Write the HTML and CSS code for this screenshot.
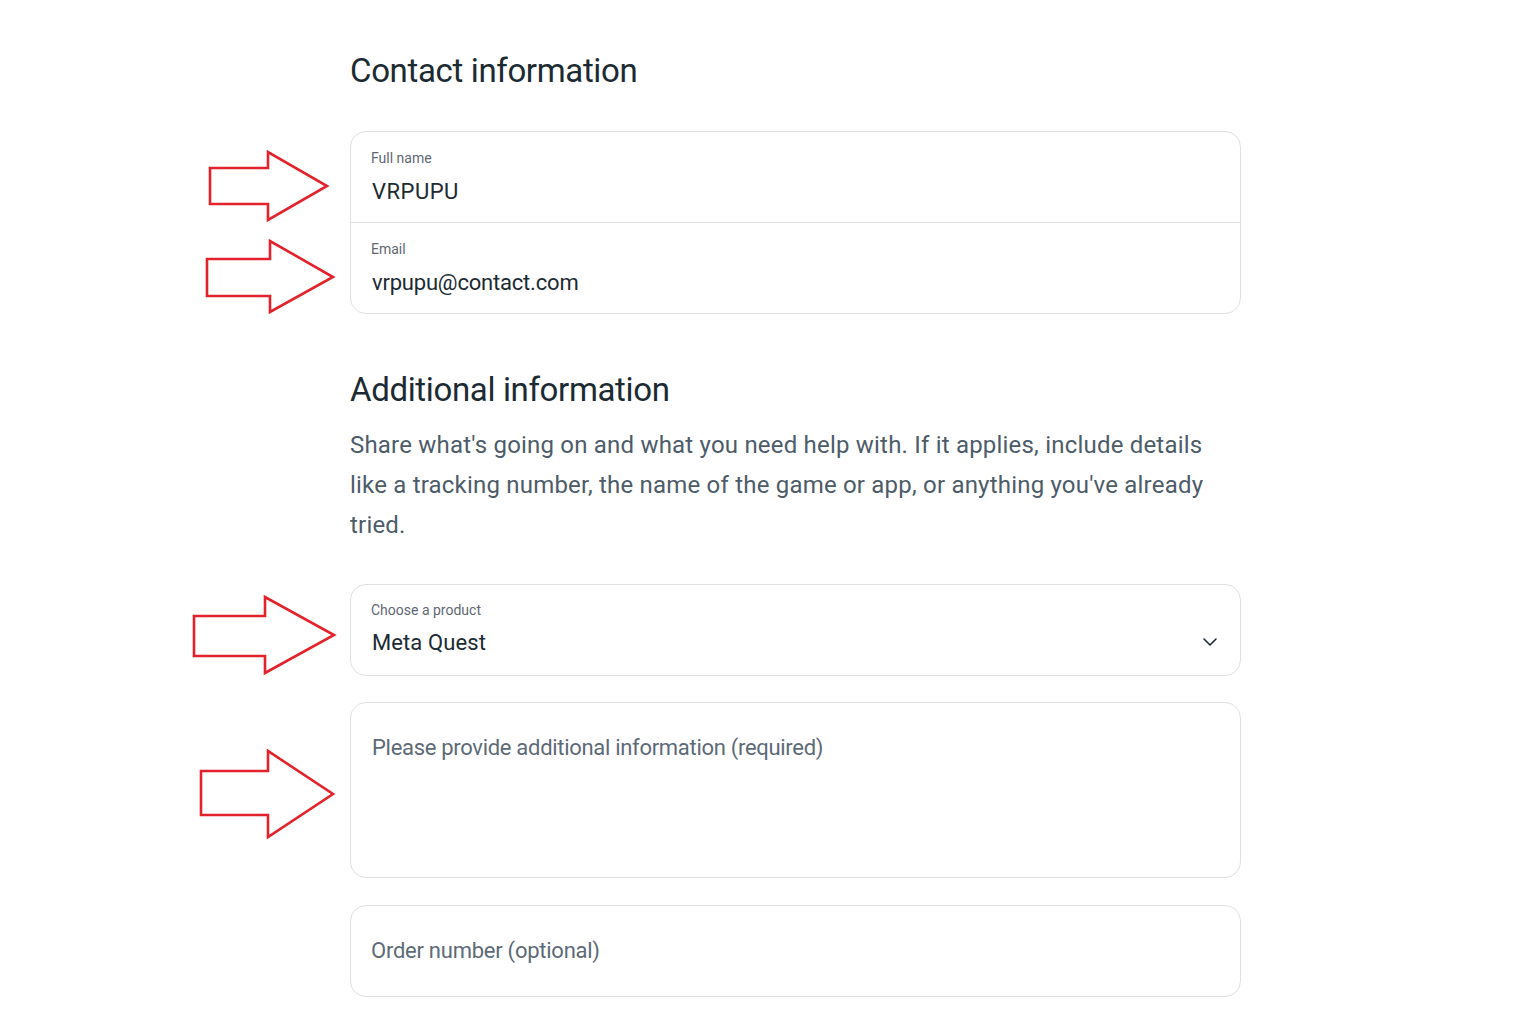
FILE: index.html
```html
<!DOCTYPE html>
<html lang="en">
<head>
  <meta charset="UTF-8">
  <title>Contact support</title>
  <link rel="stylesheet" href="styles.css">
</head>
<body>

  <div class="page">
    <!-- Annotation arrows drawn over the page -->
    <svg class="arrows" width="1536" height="1024" viewBox="0 0 1536 1024">
      <polygon points="210,168 268,168 268,152 327,186 268,220 268,204 210,204"/>
      <polygon points="207,259 270,259 270,241 333,277 270,312 270,296 207,296"/>
      <polygon points="194,616 265,616 265,597 334,635 265,673 265,656 194,656"/>
      <polygon points="201,771 268,771 268,751 333,794 268,837 268,815 201,815"/>
    </svg>

    <main class="form">
      <h2 class="section-title">Contact information</h2>

      <div class="field-group">
        <div class="field">
          <span class="field-label">Full name</span>
          <span class="field-value name">VRPUPU</span>
        </div>
        <div class="field">
          <span class="field-label">Email</span>
          <span class="field-value email">vrpupu@contact.com</span>
        </div>
      </div>

      <h2 class="section-title additional">Additional information</h2>
      <p class="intro">
        Share what's going on and what you need help with. If it applies, include details<br>
        like a tracking number, the name of the game or app, or anything you've already<br>
        tried.
      </p>

      <div class="field-group select">
        <div class="field">
          <span class="field-label">Choose a product</span>
          <span class="field-value">Meta Quest</span>
        </div>
        <svg class="chevron" width="16" height="10" viewBox="0 0 16 10">
          <path d="M2 2l6 6 6-6"/>
        </svg>
      </div>

      <div class="field-group textarea">
        <span class="placeholder">Please provide additional information (required)</span>
      </div>

      <div class="field-group single">
        <span class="placeholder">Order number (optional)</span>
      </div>
    </main>
  </div>

</body>
</html>
```

FILE: styles.css
```css
body {
  margin: 0;
  background-color: #ffffff;
  font-family: Roboto, "Liberation Sans", sans-serif;
  color: #1c2b33;
}

.page {
  position: relative;
  min-height: 1024px;
}

.arrows {
  position: absolute;
  top: 0;
  left: 0;
  pointer-events: none;
}

.arrows polygon {
  fill: none;
  stroke: #e3222b;
  stroke-width: 2.6;
  stroke-linejoin: miter;
}

.form {
  width: 891px;
  margin-left: 350px;
  padding-top: 51px;
}

.section-title {
  margin: 0;
  font-size: 33px;
  font-weight: 400;
  line-height: 40px;
  letter-spacing: -0.35px;
  color: #1c2b33;
}

.section-title.additional {
  margin-top: 56px;
}

.field-group {
  margin-top: 40px;
  border: 1px solid #dde1e4;
  border-radius: 16px;
  background: #ffffff;
}

.field {
  display: flex;
  flex-direction: column;
  padding: 16px 20px;
}

.field + .field {
  border-top: 1px solid #dde1e4;
}

.field-label {
  font-size: 14px;
  line-height: 20px;
  color: #5f6873;
}

.field-value {
  margin-top: 10px;
  padding-left: 1px;
  font-size: 22px;
  line-height: 28px;
  letter-spacing: 0.1px;
  color: #1c2b33;
}

.field-value.name {
  letter-spacing: 0.5px;
}

.field-value.email {
  letter-spacing: -0.2px;
}

.intro {
  margin: 15px 0 0;
  font-size: 24px;
  line-height: 40px;
  letter-spacing: 0.2px;
  color: #4d5c69;
  white-space: nowrap;
}

.select {
  margin-top: 39px;
  display: flex;
  align-items: center;
}

.select .field {
  flex: 1;
  padding: 15px 20px 18px;
}

.select .field-value {
  margin-top: 9px;
}

.chevron {
  margin: 24px 22px 0 0;
}

.chevron path {
  fill: none;
  stroke: #1c2b33;
  stroke-width: 1.6;
  stroke-linecap: round;
  stroke-linejoin: round;
}

.placeholder {
  font-size: 22px;
  line-height: 28px;
  color: #5d6a77;
}

.textarea {
  margin-top: 26px;
  height: 143px;
  padding: 31px 20px 0 21px;
}

.textarea .placeholder {
  letter-spacing: -0.3px;
}

.single {
  margin-top: 27px;
  height: 90px;
  padding: 0 20px;
  display: flex;
  align-items: center;
}

.single .placeholder {
  letter-spacing: -0.25px;
}
```
